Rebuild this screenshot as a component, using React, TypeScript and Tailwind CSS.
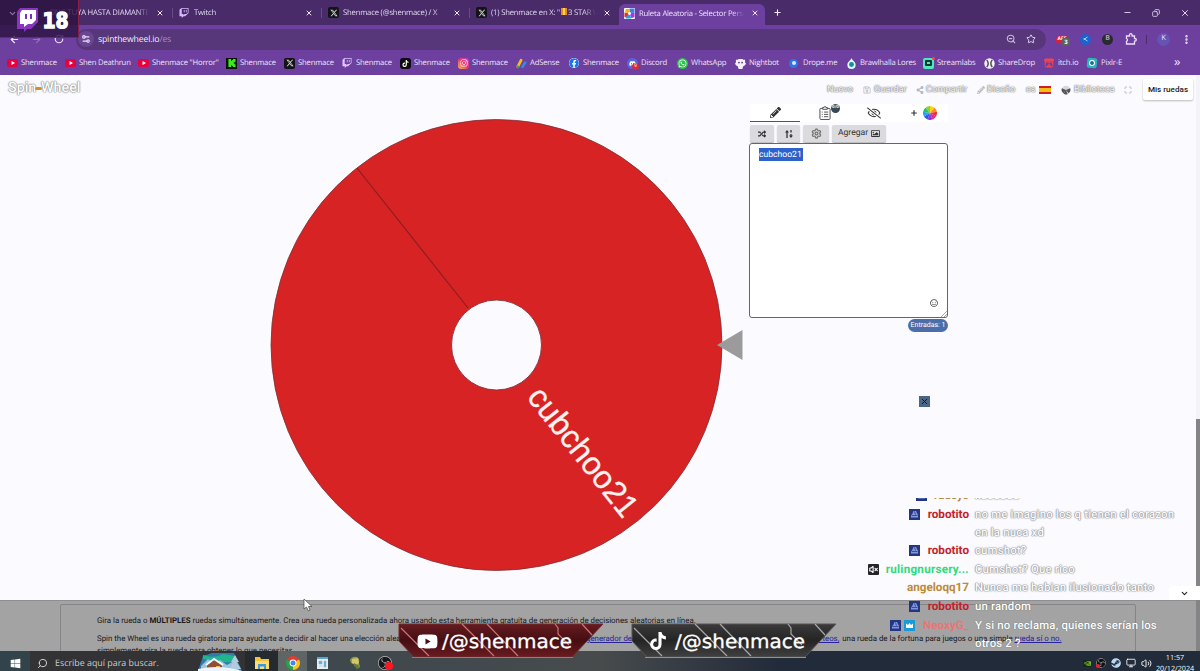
import React from "react";
import {
  FaYoutube, FaTwitch, FaTiktok, FaInstagram, FaFacebook, FaDiscord, FaWhatsapp, FaSteam,
  FaRandom, FaPencilAlt, FaRegSmile, FaRegSave, FaShareAlt, FaRegImage, FaRegEyeSlash, FaWindows,
} from "react-icons/fa";
import { FaXTwitter } from "react-icons/fa6";
import { SiKick, SiItchdotio, SiNvidia, SiObsstudio } from "react-icons/si";
import {
  ArrowLeft, ArrowRight, RotateCw, X, Plus, Minus, Copy, Search, ZoomOut, Star, EllipsisVertical,
  ChevronDown, Volume2, VolumeX, Monitor, Settings2, Crown, Maximize, Settings,
} from "lucide-react";

const ui = "font-['Open_Sans','Noto_Sans',sans-serif]";

function XBadge() {
  return (
    <span className="flex size-[11px] items-center justify-center rounded-[2px] bg-[#141418]">
      <FaXTwitter className="size-[8px] text-[#d8d8d8]" />
    </span>
  );
}

function WheelFavicon() {
  return (
    <svg viewBox="0 0 12 12" className="size-[11px]">
      <rect width="12" height="12" rx="1" fill="#fff" />
      <path d="M6 6L6 0.500H11.500V5z" fill="#3f7cf0" />
      <path d="M6 6L11.500 5V10L8 11z" fill="#a13be0" />
      <path d="M6 6L8 11.500H2V9z" fill="#16a8e8" />
      <path d="M6 6L2 10H0.500V5z" fill="#e0343c" />
      <path d="M6 6L1 5L2 1H6z" fill="#f2b020" />
      <circle cx="6" cy="6" r="1.6" fill="#fff" />
    </svg>
  );
}

function Tab({ className, icon, title, active }: { className: string; icon: React.ReactNode; title: React.ReactNode; active?: boolean }) {
  return (
    <div className={`flex items-center ${className}`}>
      <span className="w-[15px] shrink-0">{icon}</span>
      <span className={`mt-px grow overflow-hidden whitespace-nowrap text-[7.7px] leading-[12px] tracking-[-0.025em] [mask-image:linear-gradient(to_right,black_88%,transparent)] ${active ? "text-[#eee4fa]" : "text-[#e1d6ef]"}`}>{title}</span>
      <X className="ml-[7px] size-[8px] shrink-0 text-[#eee6f8]" strokeWidth={3} />
    </div>
  );
}

function TabStrip() {
  return (
    <div className="flex h-[25px] shrink-0 bg-[#482b68]">
      <Tab className="w-[164px] pl-[34px]" icon={null} title="ONG TUYA HASTA DIAMANTE" />
      <div className="ml-[8px] mt-[8px] h-[10px] w-px bg-[#694a87]" />
      <Tab className="w-[140px] pl-[6px]" icon={<FaTwitch className="size-[10px] text-[#d9b8ff]" />} title="Twitch" />
      <div className="ml-[8px] mt-[8px] h-[10px] w-px bg-[#694a87]" />
      <Tab className="w-[139px] pl-[6px]" icon={<XBadge />} title="Shenmace (@shenmace) / X" />
      <div className="ml-[8px] mt-[8px] h-[10px] w-px bg-[#694a87]" />
      <Tab className="w-[141px] pl-[6px]" icon={<XBadge />} title={<>(1) Shenmace en X: "<span className="mx-[1px] inline-block h-[7px] w-[6px] border-x-2 border-[#e48b28] bg-[#ffd34f]" />3 STAR WA</>} />
      <div className="ml-[8px] mt-[4px] flex h-[21px] rounded-t-[6px] bg-[#6d3f9e]">
        <Tab className="mt-[-3px] w-[146px] pl-[5px] pr-[6px]" active icon={<WheelFavicon />} title="Ruleta Aleatoria - Selector Perso" />
      </div>
      <Plus className="ml-[8px] mt-[8px] size-[9px] text-[#f0e8fa]" strokeWidth={3} />
      <div className="grow" />
      <div className="mr-[10px] flex items-center gap-[20px] text-[#ddd0ee]">
        <Minus className="size-[9px]" strokeWidth={2.5} />
        <Copy className="size-[8px] -scale-x-100" strokeWidth={2.6} />
        <X className="size-[10px]" strokeWidth={2.4} />
      </div>
    </div>
  );
}

function Toolbar() {
  return (
    <div className="flex h-[27px] shrink-0 items-center bg-[#6d3f9e] pt-px text-[#e9dff5]">
      <ArrowLeft className="ml-[9px] size-[11px]" strokeWidth={2.6} />
      <ArrowRight className="ml-[11px] size-[11px] text-[#9572bb]" strokeWidth={2.4} />
      <RotateCw className="ml-[12px] size-[10px]" strokeWidth={2.8} />
      <div className="ml-[12px] flex h-[21px] w-[970px] items-center rounded-full bg-[#57367a] pl-[2px]">
        <span className="flex size-[16px] items-center justify-center rounded-full bg-[#6a4592]">
          <Settings2 className="size-[10px] rotate-180" strokeWidth={2.8} />
        </span>
        <span className="ml-[4px] grow text-[8.7px] leading-none tracking-[-0.02em] text-[#f3ecfb]">spinthewheel.io<span className="text-[#a98cc8]">/es</span></span>
        <ZoomOut className="mr-[10px] size-[10px] text-[#c8b5dc]" strokeWidth={2.6} />
        <Star className="mr-[10px] size-[10px] text-[#ddd0ec]" strokeWidth={2.4} />
      </div>
      <span className="relative ml-[10px] mt-[1px] flex h-[8px] w-[12px] items-center justify-center rounded-[3px] bg-[#d32344] text-[5px] font-bold text-white">
        AFF
        <span className="absolute -right-[2px] top-[2px] flex h-[8px] w-[8px] items-center justify-center rounded-[2px] bg-[#5d6259] text-[6px] leading-none">3</span>
      </span>
      <span className="ml-[12px] flex size-[11px] items-center justify-center rounded-full bg-[#1b62d2]">
        <svg viewBox="0 0 6 6" className="size-[6px]"><path d="M4.500 1L1.500 3L4.500 5" fill="none" stroke="#a9d3ff" /><circle cx="1.500" cy="3" r="1" fill="#a9d3ff" /></svg>
      </span>
      <span className="ml-[11px] flex size-[11px] items-center justify-center rounded-full bg-[#2c2a31] text-[7px] font-bold text-[#a9a5a0]">B</span>
      <svg viewBox="0 0 12 12" className="ml-[12px] size-[12px]"><path d="M1.500 3H4.500V2a1.300 1.300 0 0 1 2.600 0V3H9.500V5.500h.5a1.300 1.300 0 0 1 0 2.600H9.500V11H1.500V8.300a1.500 1.500 0 0 0 0-2.800z" fill="none" stroke="currentColor" strokeWidth="1.300" /></svg>
      <div className="ml-[9px] h-[9px] w-px bg-[#4b2d6c]" />
      <span className="ml-[10px] flex size-[13px] items-center justify-center rounded-full bg-[#6554b5] text-[7.5px] leading-none">K</span>
      <EllipsisVertical className="ml-[11px] size-[11px]" strokeWidth={3.2} />
    </div>
  );
}

const yt = <span className="flex h-[8px] w-[11px] items-center justify-center rounded-[2px] bg-[#e9003f]"><svg viewBox="0 0 4 4" className="size-[4px]"><path d="M0.5 0L4 2L0.5 4z" fill="#fff" /></svg></span>;

const bookmarks: { w: string; icon: React.ReactNode; label: string }[] = [
  { w: "w-[58px]", icon: yt, label: "Shenmace" },
  { w: "w-[73px]", icon: yt, label: "Shen Deathrun" },
  { w: "w-[88px]", icon: yt, label: 'Shenmace "Horror"' },
  { w: "w-[58px]", icon: <span className="flex size-[11px] items-center justify-center bg-[#071407]"><SiKick className="size-[8px] text-[#3bea1c]" /></span>, label: "Shenmace" },
  { w: "w-[58px]", icon: <XBadge />, label: "Shenmace" },
  { w: "w-[58px]", icon: <FaTwitch className="size-[10px] text-[#dfc4ff]" />, label: "Shenmace" },
  { w: "w-[58px]", icon: <span className="flex size-[11px] items-center justify-center rounded-[3px] bg-[#0b0b10]"><FaTiktok className="size-[7px] text-white" /></span>, label: "Shenmace" },
  { w: "w-[58px]", icon: <span className="flex size-[11px] items-center justify-center rounded-[3px] bg-linear-to-tr from-[#fbb040] via-[#f22f63] to-[#b434d2]"><FaInstagram className="size-[8px] text-white" /></span>, label: "Shenmace" },
  { w: "w-[53px]", icon: <svg viewBox="0 0 12 12" className="size-[11px]"><path d="M2 9.5L5.5 2.5" stroke="#f4bd23" strokeWidth="3" strokeLinecap="round" /><path d="M7 9.5L10 5" stroke="#3d83ee" strokeWidth="3" strokeLinecap="round" /><circle cx="2" cy="9.8" r="1.5" fill="#38a852" /></svg>, label: "AdSense" },
  { w: "w-[58px]", icon: <FaFacebook className="size-[10px] rounded-full bg-white text-[#1474ee]" />, label: "Shenmace" },
  { w: "w-[50px]", icon: <span className="relative flex size-[11px] items-center justify-center rounded-full bg-[#5567df]"><FaDiscord className="size-[7px] text-white" /><span className="absolute -bottom-px -right-px flex size-[7px] items-center justify-center rounded-full bg-[#d92840] text-[5px] leading-none text-white">9</span></span>, label: "Discord" },
  { w: "w-[58px]", icon: <span className="flex size-[11px] items-center justify-center rounded-full bg-[#2bc34b]"><FaWhatsapp className="size-[9px] text-white" /></span>, label: "WhatsApp" },
  { w: "w-[54px]", icon: <svg viewBox="0 0 12 12" className="size-[11px]"><path d="M1 2h2l1-1h4l1 1h2v3l1 1-1 2-2 1-1 3H4L3 9 1 8 0 6l1-1z" fill="#f4eff9" /><circle cx="4.3" cy="5" r="1" fill="#5d3d80" /><circle cx="7.7" cy="5" r="1" fill="#5d3d80" /></svg>, label: "Nightbot" },
  { w: "w-[57px]", icon: <span className="flex size-[9px] items-center justify-center rounded-full bg-[#2f73ea]"><span className="size-[4px] rounded-full bg-[#d9eaff]" /></span>, label: "Drope.me" },
  { w: "w-[77px]", icon: <svg viewBox="0 0 12 12" className="size-[11px]"><path d="M6 0C7 3 10.500 4 10.500 7.500A4.500 4.500 0 0 1 1.500 7.500C1.500 4 5 3 6 0z" fill="#dffcff" /><circle cx="6" cy="7" r="2.700" fill="#178ca4" /></svg>, label: "Brawlhalla Lores" },
  { w: "w-[61px]", icon: <span className="relative flex size-[11px] items-center justify-center rounded-[2px] bg-[#52e6bd]"><span className="h-[6px] w-[7px] rounded-[1px] border-2 border-[#073a35] bg-[#52e6bd]" /><span className="absolute -right-px -top-px size-[3px] rounded-full bg-[#f04a4a]" /></span>, label: "Streamlabs" },
  { w: "w-[60px]", icon: <svg viewBox="0 0 12 12" className="size-[11px]"><circle cx="6" cy="6" r="5.700" fill="#f4f0f4" /><path d="M3 2q3 4 0 8M9 2q-3 4 0 8" stroke="#555" strokeWidth="1.600" fill="none" /></svg>, label: "ShareDrop" },
  { w: "w-[43px]", icon: <SiItchdotio className="size-[10px] text-[#ee4655]" />, label: "itch.io" },
  { w: "w-[50px]", icon: <span className="flex size-[10px] rotate-6 items-center justify-center rounded-[2px] bg-[#28b6bb]"><span className="size-[6px] rounded-full border-[1.500px] border-white bg-[#1a7296]" /></span>, label: "Pixlr-E" },
];

function BookmarksBar() {
  return (
    <div className="flex h-[23px] shrink-0 items-center bg-[#6d3f9e] pl-[7px] text-[#ede4f7]">
      {bookmarks.map((b, i) => (
        <div key={i} className={`flex shrink-0 items-center ${b.w}`}>
          <span className="-mt-px flex w-[14px] shrink-0 items-center">{b.icon}</span>
          <span className="-mt-px whitespace-nowrap text-[7.7px] leading-[11px] tracking-[-0.025em]">{b.label}</span>
        </div>
      ))}
      <span className="-mt-[4px] ml-[37px] text-[13px] leading-none">»</span>
    </div>
  );
}

const ghost = "[text-shadow:0_0_1px_#777,0_0_2px_#999,0_0_1px_#999]";

function SiteNav() {
  return (
    <div className="flex h-[28px] shrink-0 items-center font-[Roboto,sans-serif]">
      <div className="ml-[8px] mt-[-1px] flex items-center text-[14.3px] font-medium text-white">
        <span className={`w-[30px] ${ghost}`}>Spin</span>
        <span className="-ml-[3px] h-[3px] w-[7px] rounded bg-[#d39220]" />
        <span className={`-ml-px ${ghost}`}>Wheel</span>
      </div>
      <div className="grow" />
      <div className={`mt-[2px] flex items-center text-[9.200px] text-[#f6f6f8] ${ghost}`}>
        <span className="w-[36px]">Nuevo</span>
        <span className="flex w-[53px] items-center gap-[3px]"><FaRegSave className="size-[8px] text-[#b8b8bd]" />Guardar</span>
        <span className="flex w-[61px] items-center gap-[2px]"><FaShareAlt className="size-[8px] text-[#b8b8bd]" />Compartir</span>
        <span className="flex w-[49px] items-center gap-[2px]"><FaPencilAlt className="size-[8px] text-[#bcbcc0]" />Diseño</span>
        <span className="flex w-[35px] items-center gap-[3px]">es<span className="h-[8px] w-[12px] border-y-2 border-[#cf1e26] bg-[#f5bd18]" /></span>
        <span className="flex w-[63px] items-center gap-[3px]">
          <svg viewBox="0 0 12 12" className="size-[10px]"><circle cx="6" cy="6" r="5" fill="#d8d8dc" /><path d="M6 6L1 4A5 5 0 0 0 3 10zM6 6L3 10.500A5 5 0 0 0 8 11zM6 6L9 10A5 5 0 0 0 11 4z" fill="#55555c" /></svg>
          Biblioteca
        </span>
        <Maximize className="mr-[11px] size-[8px] text-[#bdbdc2]" strokeWidth={3} />
      </div>
      <button className="mr-[3px] mt-[1px] h-[21px] w-[50px] rounded-[2px] bg-white text-[8.100px] font-medium text-[#222] shadow-[0_1px_2px_#bbb]">Mis ruedas</button>
    </div>
  );
}

function Wheel() {
  return (
    <svg viewBox="0 0 484 470" className="h-[470px] w-[484px]">
      <circle cx="236.500" cy="235" r="225.500" fill="#d72324" stroke="#7a3237" strokeWidth="0.800" />
      <path d="M97 58L208 198" stroke="#8b1e22" strokeWidth="1.200" />
      <circle cx="236.500" cy="235" r="45" fill="#fafaff" stroke="#813039" strokeWidth="0.900" />
      <g transform="translate(236.500 235) rotate(51.500)">
        <text x="59.500" y="9.700" className="font-['Liberation_Sans',Arial,sans-serif] text-[32.5px]" fill="#fff2ee" stroke="#fff2ee" strokeWidth="0.3" textLength="156" lengthAdjust="spacingAndGlyphs">cubchoo21</text>
      </g>
      <path d="M457 235L482.500 220V250z" fill="#9b9b9b" />
    </svg>
  );
}

function ColorWheel() {
  const colors = ["#ffd21c", "#ff8a1d", "#f13030", "#e52694", "#8e35d9", "#3559e6", "#26a5eb", "#25bd77", "#8bd52a"];
  return (
    <svg viewBox="-7 -7 14 14" className="size-[14px]">
      {colors.map((c, i) => (
        <path key={c} d="M0 0L0 -7A7 7 0 0 1 4.500 -5.360z" fill={c} transform={`rotate(${i * 40})`} />
      ))}
    </svg>
  );
}

function EntriesPanel() {
  const btn = "flex h-[17px] items-center justify-center rounded-[2px] bg-[#dbdbdf] text-[#333] shadow-[0_1px_1px_#bbb]";
  return (
    <div className="w-[198px] shrink-0 font-[Roboto,sans-serif]">
      <div className="mt-px flex h-[18px] bg-white text-[#333]">
        <div className="flex w-[50px] items-center justify-center border-b border-[#555]"><FaPencilAlt className="size-[11px]" /></div>
        <div className="relative flex w-[49px] items-center justify-center">
          <svg viewBox="0 0 13 15" className="h-[14px] w-[12px]" fill="none" stroke="#444"><rect x="1" y="2.500" width="11" height="12" rx="1" /><path d="M4 2.500V1.500h1.500a1 1 0 0 1 2 0H9v2H4z" fill="#fff" /><path d="M5.500 6.500H10M5.500 9H10M5.500 11.500H10M3 6.500H4M3 9H4M3 11.500H4" /></svg>
          <span className="absolute left-[31px] top-0 flex size-[9px] items-center justify-center rounded-full bg-[#344856] text-[4.500px] font-bold leading-none text-white">0/0</span>
        </div>
        <div className="flex w-[49px] items-center justify-center"><FaRegEyeSlash className="size-[14px]" /></div>
        <div className="flex w-[50px] items-center justify-center gap-[5px]"><Plus className="size-[8px]" strokeWidth={3.5} /><ColorWheel /></div>
      </div>
      <div className="mt-[3px] flex">
        <div className={`w-[24px] ${btn}`}><FaRandom className="size-[8px]" /></div>
        <div className={`ml-[3px] w-[23px] ${btn}`}>
          <svg viewBox="0 0 8 8" className="size-[8px]" stroke="#333" strokeWidth="1.3"><path d="M2 8V2M6 0V2.500M6 4V6" /><path d="M0 2.500L2 0L4 2.500zM4 5.500H8L6 8z" fill="#333" stroke="none" /></svg>
        </div>
        <div className={`ml-[3px] w-[26px] ${btn}`}><Settings className="size-[11px] text-[#777]" strokeWidth={2.8} /></div>
        <div className={`ml-[3px] w-[54px] gap-[3px] text-[8.600px] ${btn}`}>Agregar<FaRegImage className="size-[9px]" /></div>
      </div>
      <div className="relative -ml-px mt-[1px] h-[175px] w-[199px] rounded-[3px] border border-[#65656b] bg-white pl-[9px] pt-[4px]">
        <span className="block h-[13px] w-[44px] whitespace-nowrap bg-[#2d62cc] text-[8.600px] leading-[14px] text-white">cubchoo21</span>
        <FaRegSmile className="absolute bottom-[10px] right-[9px] size-[8px] text-[#444]" />
        <svg viewBox="0 0 6 6" className="absolute bottom-0 right-0 size-[6px]"><path d="M0 6L6 0M3 6L6 3" stroke="#888" strokeWidth="0.700" /></svg>
      </div>
      <div className="mt-[1px] flex justify-end">
        <span className="flex h-[13px] w-[40px] items-center justify-center whitespace-nowrap rounded-full bg-[#4a6ea9] text-[7px] text-white">Entradas: 1</span>
      </div>
      <div className="ml-[169px] mt-[64px] flex size-[11px] items-center justify-center bg-[#4b6585]"><X className="size-[9px] text-[#0d1724]" strokeWidth={2.500} /></div>
    </div>
  );
}

function InfoPanel() {
  return (
    <div className="flex h-[51px] shrink-0 overflow-hidden border-t border-[#8e8e90] bg-[#a3a3a4] pt-[3px]">
      <div className="ml-[60px] h-[70px] w-[1076px] shrink-0 rounded-[2px] border border-[#858587] pl-[36px] pt-[10px] font-[Roboto,sans-serif] text-[7.86px] leading-[12px] text-[#19191b]">
        <p className="whitespace-nowrap">Gira la rueda o <b>MÚLTIPLES</b> ruedas simultáneamente. Crea una rueda personalizada ahora usando esta herramienta gratuita de generación de decisiones aleatorias en línea.</p>
        <div className="mt-[6px] flex whitespace-nowrap">
          <span className="w-[489px]">Spin the Wheel es una rueda giratoria para ayudarte a decidir al hacer una elección aleatoria.</span>
          <span className="w-[225px] text-[#292399] underline">generador de</span>
          <span className="text-[#292399] underline">sorteos,</span>
          <span className="ml-[3px]">una rueda de la fortuna para juegos o una simple <span className="text-[#292399] underline">rueda sí o no.</span></span>
        </div>
        <p>simplemente gira la rueda para obtener lo que necesitas.</p>
      </div>
    </div>
  );
}

function Taskbar() {
  return (
    <div className={`flex h-[20px] shrink-0 items-center overflow-hidden bg-linear-to-r from-[#34444c] via-[#474b4c] via-50% to-[#222b3a] to-65% text-white ${ui}`}>
      <div className="flex h-full w-[30px] shrink-0 items-center justify-center bg-[#33434b] pt-[4px]"><FaWindows className="size-[11px]" /></div>
      <div className="flex h-full w-[215px] shrink-0 items-center bg-[#333335] pl-[7px] pt-[4px]">
        <Search className="size-[11px] -scale-x-100 text-[#ddd]" strokeWidth={2} />
        <span className="ml-[7px] w-[143px] whitespace-nowrap text-[8.9px] leading-[14px] text-[#ccc]">Escribe aquí para buscar.</span>
        <svg viewBox="0 0 44 18" className="-mt-[2px] h-[18px] w-[44px]">
          <path d="M0 18L5 3L14 0H36L44 18z" fill="#3379ac" />
          <path d="M5 2q12 4 20-1l12 2-3 6q-14 1-29-3z" fill="#20b68d" />
          <path d="M3 13L10 6L17 11L22 7L29 12L36 8L41 17H3z" fill="#9cc2dc" />
          <path d="M9 12L16 7L24 12V18H9z" fill="#8f5135" /><path d="M8 12L16 6L25 12" stroke="#f5faff" strokeWidth="2" fill="none" />
          <path d="M18 13h4v4h-4z" fill="#f4b648" /><path d="M37 2l-4 7h2l-3 7h11l-4-7h2z" fill="#b1cbdc" /><path d="M0 16q22-5 44 2H0z" fill="#edf5fa" />
        </svg>
      </div>
      <div className="flex h-full w-[33px] shrink-0 items-center justify-center bg-[#252a2e] pt-[3px]">
        <svg viewBox="0 0 14 12" className="h-[12px] w-[14px]"><path d="M0 0h5l1 2h8v10H0z" fill="#f5c23e" /><path d="M0 4h14v8H0z" fill="#ffdc70" /><path d="M3 7h8v5H9V9.500H5V12H3z" fill="#3d99dc" /></svg>
      </div>
      <div className="flex h-full w-[29px] shrink-0 items-center justify-center bg-[#5f6465] pt-[4px]">
        <svg viewBox="-7 -7 14 14" className="size-[14px]"><path d="M0 0L-6.060 -3.500A7 7 0 0 1 6.060 -3.500z" fill="#e43b30" /><path d="M0 0L-6.060 -3.500A7 7 0 0 0 0 7z" fill="#22a44c" /><path d="M0 0L6.060 -3.500A7 7 0 0 1 0 7z" fill="#fbc31b" /><circle r="3.400" fill="#fff" /><circle r="2.500" fill="#4285f4" /></svg>
      </div>
      <svg viewBox="0 0 13 14" className="ml-[9px] mt-[3px] h-[14px] w-[13px] shrink-0"><rect x="1" y="1" width="11" height="12" fill="#e5eef4" /><path d="M1 1h11v2H1z" fill="#55a4da" /><path d="M3 5h3v3H3zM8 5h2v6H8zM3 10h4" fill="#6aabd6" stroke="#91aebf" strokeWidth=".4" /></svg>
      <svg viewBox="0 0 14 14" className="ml-[19px] mt-[3px] size-[14px] shrink-0"><path d="M2 4q2-4 7-3 3 2 2 6l1 4-3 2-2-4-4-2z" fill="#8b9c49" /><path d="M4 3l6-1 1 5-3 2-4-2z" fill="#d3c568" /><path d="M6 7l5 3-1 3-4-3z" fill="#5f7b40" /></svg>
      <span className="relative ml-[16px] mt-[4px] flex size-[14px] shrink-0 items-center justify-center rounded-full bg-[#17191c]"><SiObsstudio className="size-[14px] text-[#c8c8c8]" /><span className="absolute -right-px bottom-0 size-[8px] rounded-full bg-[#ff171f]" /></span>
      <div className="grow" />
      <div className="flex shrink-0 items-center gap-[5px] pt-[4px]">
        <span className="flex h-[7px] w-[8px] items-center justify-center bg-[#172719]"><SiNvidia className="size-[7px] text-[#72b52c]" /></span>
        <span className="relative"><SiObsstudio className="size-[10px] rounded-full bg-[#101216] text-[#ddd]" /><span className="absolute bottom-0 left-0 size-[4px] rounded-full bg-[#ed2028]" /></span>
        <FaSteam className="size-[10px] text-[#b8d9f3]" />
        <Monitor className="size-[10px]" strokeWidth={2} />
        <Volume2 className="size-[11px]" strokeWidth={2} />
      </div>
      <div className="ml-[4px] mr-[6px] mt-[5px] w-[38px] shrink-0 text-center text-[7.2px] leading-[11px]"><div>11:57</div><div>20/12/2024</div></div>
    </div>
  );
}

function CubeBadge() {
  return (
    <svg viewBox="0 0 11 11" className="size-[11px] shrink-0"><rect width="11" height="11" fill="#24367f" /><path d="M3 5.500L4.500 2h2.500L9 6v2.500H2V6z" fill="#8496dc" /><path d="M2.500 6.500h6M5.500 2.500l1 3" stroke="#3a4da0" fill="none" /></svg>
  );
}

function CrownBadge() {
  return (
    <svg viewBox="0 0 11 11" className="ml-[3px] size-[11px] shrink-0"><rect width="11" height="11" fill="#189bd7" /><path d="M2 3.500L4 5L5.500 3L7 5L9 3.500V8H2z" fill="#fff" /></svg>
  );
}

const chat: { badges?: "cube" | "mute" | "crown"; name: string; color: string; lines: string[]; h: string; solid?: boolean }[] = [
  { badges: "cube", name: "robotito", color: "text-[#c51f2d]", lines: ["no me imagino los q tienen el corazon", "en la nuca xd"], h: "h-[36px]" },
  { badges: "cube", name: "robotito", color: "text-[#c51f2d]", lines: ["cumshot?"], h: "h-[19px]" },
  { badges: "mute", name: "rulingnursery...", color: "text-[#34d979]", lines: ["Cumshot? Que rico"], h: "h-[18px]" },
  { name: "angeloqq17", color: "text-[#bd8b39]", lines: ["Nunca me habian ilusionado tanto"], h: "h-[19px]" },
  { badges: "cube", name: "robotito", color: "text-[#c51f2d]", lines: ["un random"], h: "h-[19px]", solid: true },
  { badges: "crown", name: "NeoxyG_", color: "text-[#e87577]", lines: ["Y si no reclama, quienes serían los", "otros 2 ?"], h: "h-[36px]", solid: true },
];

function Chat() {
  return (
    <div className="absolute left-[860px] top-[498px] w-[336px] overflow-hidden font-[Roboto,sans-serif] text-[11.400px] leading-[18px]">
      <div className="flex h-[7px] items-end overflow-hidden font-bold leading-[12px]">
        <div className="flex w-[109px] items-end justify-end gap-[7px] pb-[4px]"><CubeBadge /><span className="text-[#b98745]">rudeyo</span></div>
        <span className={`ml-[6px] pb-[4px] font-medium text-white ${ghost}`}>xdddddd</span>
      </div>
      {chat.map((m, i) => (
        <div key={i} className={`flex ${m.h}`}>
          <div className={`flex h-[18px] w-[109px] shrink-0 items-center justify-end text-[11.7px] font-bold ${m.color}`}>
            {m.badges === "cube" && <CubeBadge />}
            {m.badges === "mute" && <span className="-mr-px flex size-[11px] shrink-0 items-center justify-center rounded-[1px] bg-[#242429] text-white"><VolumeX className="size-[9px]" strokeWidth={3} /></span>}
            {m.badges === "crown" && <><CubeBadge /><CrownBadge /></>}
            <span className={m.badges === "mute" ? "ml-[8px] tracking-[0.02em]" : "ml-[8px]"}>{m.name}</span>
          </div>
          <div className={`ml-[6px] whitespace-nowrap font-medium tracking-[0.015em] ${m.solid ? "text-white [text-shadow:0_0_1px_#555]" : `text-[#fafaff] ${ghost}`}`}>
            {m.lines.map((l) => <div key={l}>{l}</div>)}
          </div>
        </div>
      ))}
    </div>
  );
}

function Banner({ dark }: { dark?: boolean }) {
  return (
    <svg viewBox="0 0 206 35" className="h-[35px] w-[206px]">
      <defs><linearGradient id={dark ? "bd" : "br"} x1="0" y1="0" x2="0" y2="1"><stop stopColor={dark ? "#3c3a3b" : "#651c20"} /><stop offset=".5" stopColor={dark ? "#242425" : "#450e12"} /><stop offset="1" stopColor={dark ? "#414041" : "#6a1b20"} /></linearGradient></defs>
      <path d="M1 1H205L174 34H16L1 18z" fill={dark ? "url(#bd)" : "url(#br)"} stroke={dark ? "#555" : "#712b2f"} />
      <path d="M64 1L84 21L96 33M89 1L120 33M3 5L31 33M157 1L160 5V11L171 22M184 1L194 12" stroke={dark ? "#a8a5a7" : "#c77579"} strokeWidth="1.200" fill="none" />
      <path d="M14 34.500H175" stroke={dark ? "#949293" : "#9d777a"} />
      <text x="44" y="25" className="font-['DejaVu_Sans',sans-serif] text-[19px]" fill="#fff" stroke="#fff" strokeWidth=".3" textLength="130" lengthAdjust="spacingAndGlyphs">/@shenmace</text>
      {dark ? <FaTiktok x={18} y={9} size={18} color="#fff" /> : <FaYoutube x={19} y={8} size={21} color="#fff" />}
    </svg>
  );
}

function ViewerCount() {
  return (
    <div className="absolute left-0 top-0 flex h-[38px] w-[79px] items-center border-b border-r border-[#8a1f47] bg-[#2a1340]/80 pl-[16px] pt-[2px]">
      <ChevronDown className="absolute left-[8px] top-[9px] size-[9px] text-[#8c7aa0]" strokeWidth={3} />
      <svg viewBox="0 0 23 25" className="relative h-[25px] w-[23px]">
        <path d="M4 1H22V15L15 22H11L8 25V22H1V5z" fill="#8a35c0" />
        <path d="M6 3H20V13L16 17H12L8 20V17H4V6z" fill="#fff" />
        <path d="M10 7v5M15 7v5" stroke="#7733b5" strokeWidth="2" />
      </svg>
      <svg viewBox="0 0 28 24" className="ml-[3px] h-[24px] w-[28px]"><text x="0.5" y="20" className="font-['DejaVu_Sans',sans-serif] text-[21.5px] font-bold" fill="#fff" stroke="#fff" strokeWidth="1.4" textLength="26" lengthAdjust="spacingAndGlyphs">18</text></svg>
    </div>
  );
}

export default function App() {
  return (
    <div className={`relative flex h-[671px] w-[1200px] flex-col overflow-hidden bg-[#fafaff] [text-rendering:geometricPrecision] ${ui}`}>
      <TabStrip />
      <Toolbar />
      <BookmarksBar />
      <div className="flex h-[576px] shrink-0">
        <main className="flex w-[1196px] flex-col">
          <SiteNav />
          <div className="flex h-[497px] shrink-0">
            <div className="ml-[260px] w-[490px] shrink-0 pt-[7px]"><Wheel /></div>
            <EntriesPanel />
          </div>
          <InfoPanel />
        </main>
        <div className="flex w-[4px] flex-col justify-end bg-[#f4f3f8]"><div className="h-[232px] bg-[#848487]" /></div>
      </div>
      <Taskbar />
      <div className="absolute left-[1169px] top-[586px] flex h-[14px] w-[31px] items-center justify-center rounded-tl-[4px] bg-white"><ChevronDown className="size-[9px] text-[#222]" strokeWidth={3} /></div>
      <Chat />
      <div className="absolute left-[398px] top-[623px]"><Banner /></div>
      <div className="absolute left-[631px] top-[623px]"><Banner dark /></div>
      <ViewerCount />
      <svg viewBox="0 0 10 14" className="absolute left-[303px] top-[598px] h-[14px] w-[10px]"><path d="M1 1V11L3.500 9L5.500 13L7 12L5.500 8.500H9z" fill="#fff" stroke="#444" strokeWidth=".7" /></svg>
    </div>
  );
}
